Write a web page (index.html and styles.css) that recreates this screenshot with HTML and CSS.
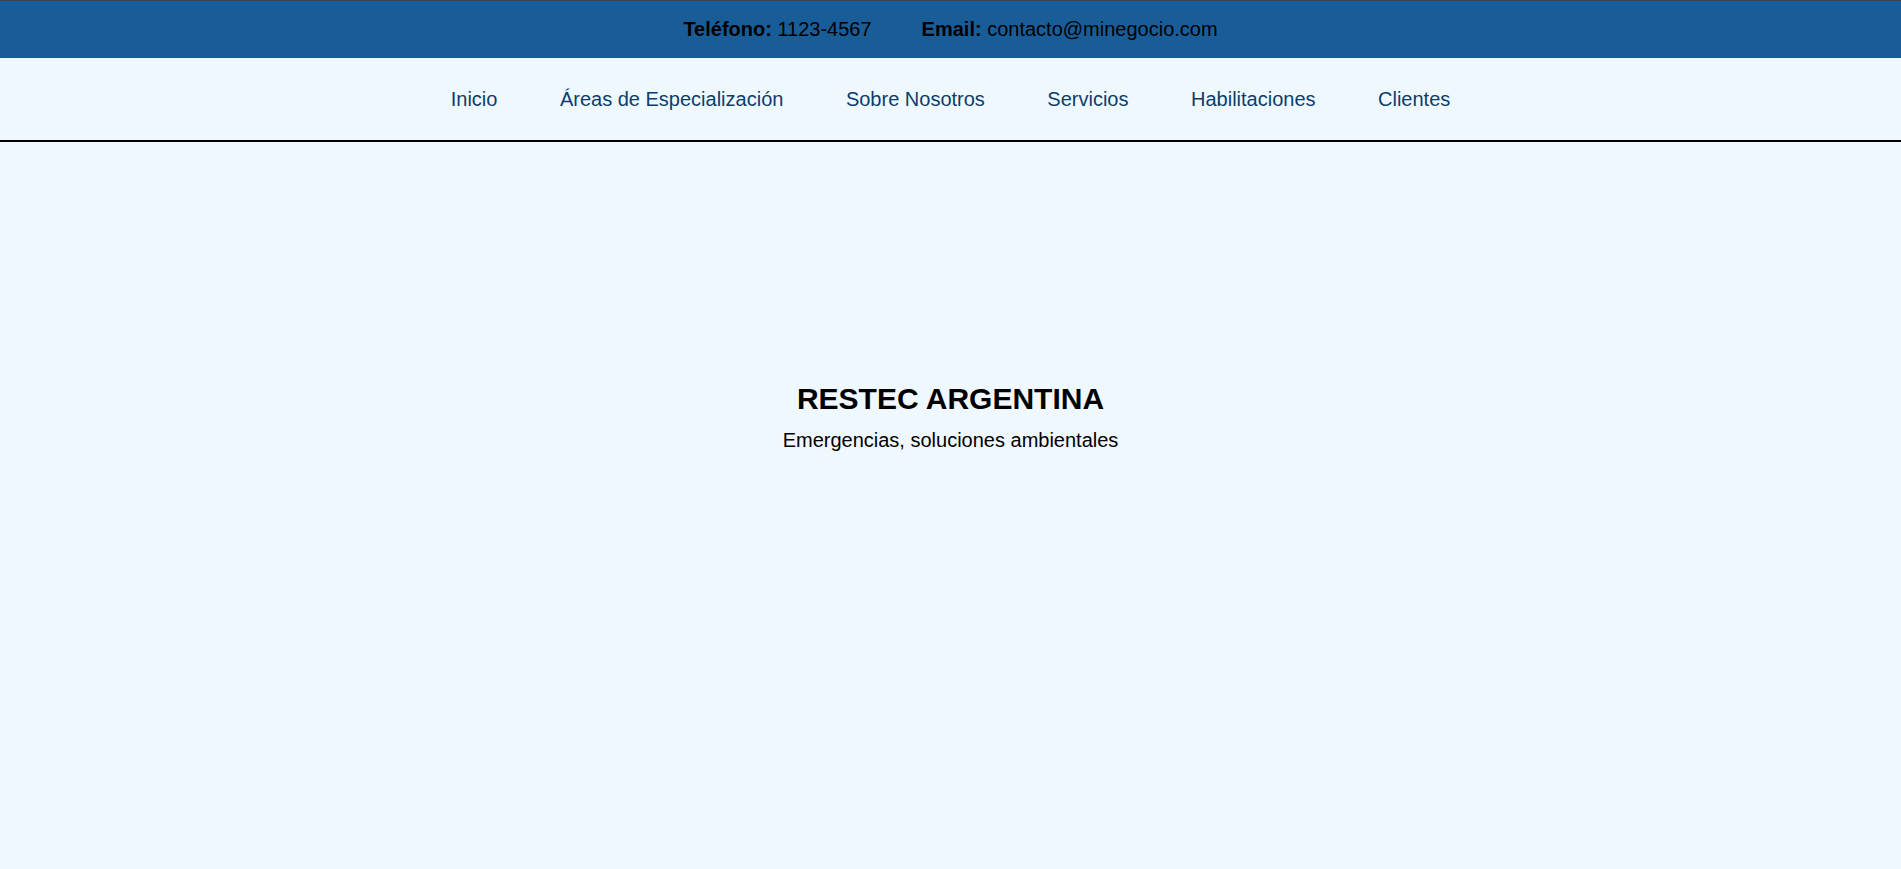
FILE: index.html
```html
<!DOCTYPE html>
<html lang="es">
<head>
<meta charset="utf-8">
<title>RESTEC ARGENTINA</title>
<link rel="stylesheet" href="styles.css">
</head>
<body>
<header class="topbar">
  <span class="contact"><strong>Teléfono:</strong> 1123-4567</span>
  <span class="contact"><strong>Email:</strong> contacto@minegocio.com</span>
</header>
<nav class="nav">
  <ul class="nav-list">
    <li><a href="#">Inicio</a></li>
    <li><a href="#">Áreas de Especialización</a></li>
    <li><a href="#">Sobre Nosotros</a></li>
    <li><a href="#">Servicios</a></li>
    <li><a href="#">Habilitaciones</a></li>
    <li><a href="#">Clientes</a></li>
  </ul>
</nav>
<main class="hero">
  <h1 class="hero-title">RESTEC ARGENTINA</h1>
  <p class="hero-sub">Emergencias, soluciones ambientales</p>
</main>
</body>
</html>
```
FILE: styles.css
```css
* { box-sizing: border-box; }
html, body {
  margin: 0;
  padding: 0;
  height: 100%;
}
body {
  background: #f0f8ff;
  font-family: "Liberation Sans", Arial, sans-serif;
  color: #000;
}
.topbar {
  height: 58px;
  border-top: 1px solid #3d4650;
  background: #195d98;
  display: flex;
  justify-content: center;
  align-items: center;
  gap: 50px;
  font-size: 20px;
  line-height: 23px;
  color: #000;
}
.nav {
  height: 84px;
  border-bottom: 2px solid #000;
  background: #f0f8ff;
  display: flex;
  align-items: center;
  justify-content: center;
}
.nav-list {
  list-style: none;
  margin: 0;
  padding: 0;
  display: flex;
  gap: 62.5px;
}
.nav-list a {
  font-size: 20px;
  line-height: 23px;
  color: #0b3d6c;
  text-decoration: none;
}
.hero {
  padding-top: 240px;
  text-align: center;
}
.hero-title {
  margin: 0 0 13px;
  font-size: 30px;
  line-height: 34px;
  font-weight: bold;
}
.hero-sub {
  margin: 0;
  font-size: 20px;
  line-height: 23px;
}
```
